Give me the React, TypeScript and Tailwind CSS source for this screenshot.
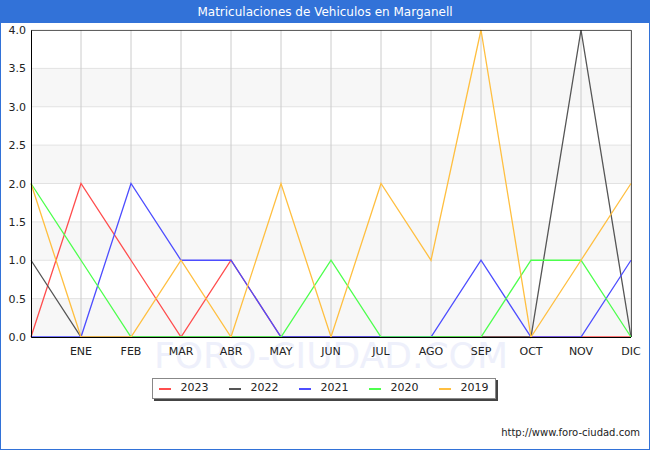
const series = [
  { name: "2023", color: "#ff4d4d", data: [0, 2, 1, 0, 1, 0, 0, 0, 0, 0, 0, 0, 0] },
  { name: "2022", color: "#555555", data: [1, 0, 0, 0, 0, 0, 0, 0, 0, 0, 0, 4, 0] },
  { name: "2021", color: "#4d4dff", data: [0, 0, 2, 1, 1, 0, 0, 0, 0, 1, 0, 0, 1] },
  { name: "2020", color: "#4dff4d", data: [2, 1, 0, 0, 0, 0, 1, 0, 0, 0, 1, 1, 0] },
  { name: "2019", color: "#ffbf40", data: [2, 0, 0, 1, 0, 2, 0, 2, 1, 4, 0, 1, 2] },
];
const months = ["ENE", "FEB", "MAR", "ABR", "MAY", "JUN", "JUL", "AGO", "SEP", "OCT", "NOV", "DIC"];
const ticks = ["4.0", "3.5", "3.0", "2.5", "2.0", "1.5", "1.0", "0.5", "0.0"];

function Chart() {
  const x = (i: number) => 30 + i * 50;
  const y = (v: number) => 337 - v * 76.75;
  return (
    <svg width="648" height="370" className="block" style={{ fontFamily: "'DejaVu Sans', sans-serif" }}>
      <text x={330} y={368} fontSize="36" textAnchor="middle" fill="#eef0fb">FORO-CIUDAD.COM</text>
      {[0, 1, 2, 3].map((k) => (
        <rect key={k} x={30} y={y(3.5 - k)} width={600} height={38.4} fill="#f7f7f7" />
      ))}
      {ticks.map((t, i) => (
        <g key={t}>
          <line x1={30} x2={630} y1={30 + i * 38.375} y2={30 + i * 38.375} stroke="#e2e2e2" />
          <text x={25} y={34 + i * 38.375} fontSize="11" textAnchor="end" fill="#222">{t}</text>
        </g>
      ))}
      {months.map((m, i) => (
        <g key={m}>
          <line x1={x(i + 1)} x2={x(i + 1)} y1={30} y2={337} stroke="#cccccc" />
          <text x={x(i + 1)} y={355} fontSize="11" textAnchor="middle" fill="#222">{m}</text>
        </g>
      ))}
      {series.map((s) => (
        <polyline key={s.name} fill="none" stroke={s.color} strokeWidth="1.3"
          points={s.data.map((v, i) => `${x(i)},${y(v)}`).join(" ")} />
      ))}
      <path d="M30.5 30.5 V337.5 H630" fill="none" stroke="#000" />
      <path d="M30 30.5 H630.5 V337" fill="none" stroke="#000" strokeWidth="0.6" />
    </svg>
  );
}

export default function App() {
  return (
    <div className="w-[650px] h-[450px] border-x border-b border-[#3272d8] bg-white flex flex-col" style={{ fontFamily: "'DejaVu Sans', sans-serif" }}>
      <div className="h-[23px] bg-[#3272d8] text-white text-[12px] flex items-center justify-center relative z-10">
        Matriculaciones de Vehiculos en Marganell
      </div>
      <div className="-mt-[23px]">
        <Chart />
      </div>
      <div className="flex justify-center mt-[8px] ml-[-3px]">
        <div className="flex items-center gap-[20px] border border-[#888] px-[6px] h-[21px] text-[11px] shadow-[2px_2px_0_#444] bg-white">
          {series.map((s) => (
            <div key={s.name} className="flex items-center gap-[10px]">
              <span className="w-[12px] h-[2px]" style={{ background: s.color }} />
              <span className="text-[#222]">{s.name}</span>
            </div>
          ))}
        </div>
      </div>
      <div className="mt-[26px] mr-[9px] text-right text-[10px] text-[#222]">http://www.foro-ciudad.com</div>
    </div>
  );
}
